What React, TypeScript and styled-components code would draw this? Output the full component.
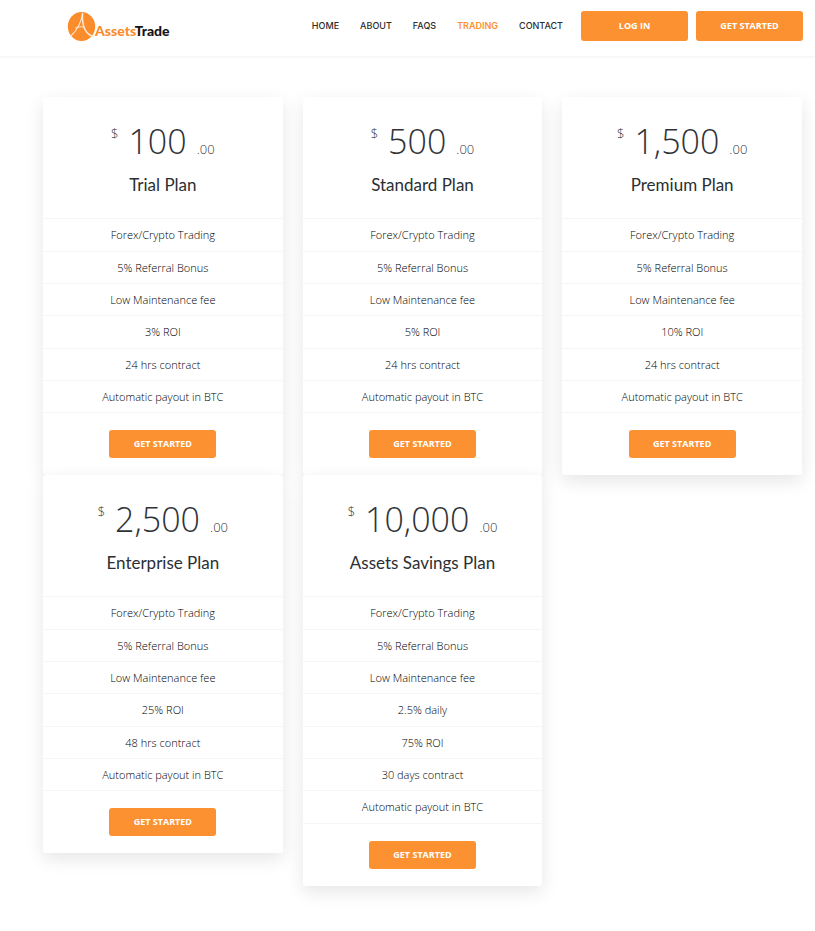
import React from "react";
import styled, { createGlobalStyle } from "styled-components";

const GlobalStyle = createGlobalStyle`
  *, *::before, *::after { box-sizing: border-box; }
  body {
    margin: 0;
    background: #fff;
    color: #2f3338;
    font-family: "Open Sans", "Noto Sans", sans-serif;
  }
`;

const Header = styled.header`
  display: flex;
  align-items: center;
  justify-content: space-between;
  height: 56px;
  padding: 0 12px 4px 64px;
  background: #fff;
  box-shadow: 0 0 3px rgba(60, 72, 88, 0.15);
`;

const Brand = styled.a`
  display: flex;
  text-decoration: none;
`;

const LogoArt = styled.svg`
  display: block;
  width: 116px;
  height: 36px;
`;

const HeaderEnd = styled.div`
  display: flex;
  align-items: center;
  gap: 18px;
`;

const Nav = styled.nav`
  display: flex;
  gap: 21px;
`;

const NavLink = styled.a<{ $active?: boolean }>`
  color: ${(p) => (p.$active ? "#fb9131" : "#2c2c2c")};
  font: ${(p) => (p.$active ? 600 : 500)} 9px/14px Inter, sans-serif;
  text-decoration: none;
  text-transform: uppercase;
`;

const Actions = styled.div`
  display: flex;
  gap: 8px;
`;

const Button = styled.button<{ $tall?: boolean }>`
  width: 107px;
  height: ${(p) => (p.$tall ? 30 : 28)}px;
  padding: 0;
  border: 0;
  border-radius: 3px;
  background: #fb9131;
  color: #fff;
  font: 700 9px/14px "Open Sans", "Noto Sans", sans-serif;
  text-transform: uppercase;
  cursor: pointer;
`;

const Plans = styled.main`
  display: grid;
  grid-template-columns: repeat(3, 1fr);
  column-gap: 20px;
  align-items: start;
  padding: 41px 13px 46px 43px;
`;

const Card = styled.article`
  padding-bottom: 17px;
  border-radius: 3px;
  background: #fff;
  text-align: center;
  box-shadow: 0 6px 18px rgba(0, 0, 0, 0.1);
`;

const CardHead = styled.div`
  height: 121px;
  padding-top: 20px;
`;

const Price = styled.div`
  display: flex;
  justify-content: center;
  gap: 10px;
  height: 48px;
  font-weight: 300;
`;

const Currency = styled.span`
  font-size: 13px;
  line-height: 32px;
`;

const Amount = styled.span`
  font-size: 34px;
  line-height: 48px;
`;

const Cents = styled.span`
  align-self: flex-end;
  font-size: 13px;
  line-height: 32px;
`;

const PlanName = styled.h2`
  margin: 8px 0 0;
  color: #2b2f33;
  font: 400 17px/24px Lato, sans-serif;
`;

const Features = styled.ul`
  margin: 0 0 17px;
  padding: 0;
  list-style: none;
  border-top: 1px solid #f5f5f5;
`;

const Feature = styled.li`
  height: 32px;
  border-bottom: 1px solid #f5f5f5;
  color: #000;
  font-size: 11px;
  font-weight: 300;
  line-height: 32px;

  &:nth-child(3n + 1) {
    height: 33px;
  }
`;

const links = ["Home", "About", "FAQs", "Trading", "Contact"];

const plan = (name: string, amount: string, terms: string[]) => ({
  name,
  amount,
  features: [
    "Forex/Crypto Trading",
    "5% Referral Bonus",
    "Low Maintenance fee",
    ...terms,
    "Automatic payout in BTC",
  ],
});

const plans = [
  plan("Trial Plan", "100", ["3% ROI", "24 hrs contract"]),
  plan("Standard Plan", "500", ["5% ROI", "24 hrs contract"]),
  plan("Premium Plan", "1,500", ["10% ROI", "24 hrs contract"]),
  plan("Enterprise Plan", "2,500", ["25% ROI", "48 hrs contract"]),
  plan("Assets Savings Plan", "10,000", ["2.5% daily", "75% ROI", "30 days contract"]),
];

function Logo() {
  return (
    <LogoArt viewBox="0 0 116 36" role="img" aria-label="AssetsTrade">
      <ellipse cx="17.5" cy="18.5" rx="13.7" ry="14.5" fill="#fb8c2c" />
      <g fill="none" stroke="#ffe9d3" strokeLinecap="round">
        <path d="M18.5 5.5C17.5 13 13 22 7 28" strokeWidth="1.1" />
        <path d="M18.5 5.5C18 15 20 25.5 29 28.5" strokeWidth="1.5" />
        <path d="M11.5 20C14.5 18.8 17.5 18.6 20 19" strokeWidth="1" />
      </g>
      <text x="31" y="28" fontFamily="Lato, sans-serif" fontSize="14" fontWeight="900">
        <tspan fill="#fb8c2c">Assets</tspan>
        <tspan fill="#151515">Trade</tspan>
      </text>
    </LogoArt>
  );
}

export default function App() {
  return (
    <>
      <GlobalStyle />
      <Header>
        <Brand href="#">
          <Logo />
        </Brand>
        <HeaderEnd>
          <Nav>
            {links.map((label) => (
              <NavLink key={label} href="#" $active={label === "Trading"}>
                {label}
              </NavLink>
            ))}
          </Nav>
          <Actions>
            <Button $tall>Log in</Button>
            <Button $tall>Get started</Button>
          </Actions>
        </HeaderEnd>
      </Header>
      <Plans>
        {plans.map((p) => (
          <Card key={p.name}>
            <CardHead>
              <Price>
                <Currency>$</Currency>
                <Amount>{p.amount}</Amount>
                <Cents>.00</Cents>
              </Price>
              <PlanName>{p.name}</PlanName>
            </CardHead>
            <Features>
              {p.features.map((f) => (
                <Feature key={f}>{f}</Feature>
              ))}
            </Features>
            <Button>Get started</Button>
          </Card>
        ))}
      </Plans>
    </>
  );
}
